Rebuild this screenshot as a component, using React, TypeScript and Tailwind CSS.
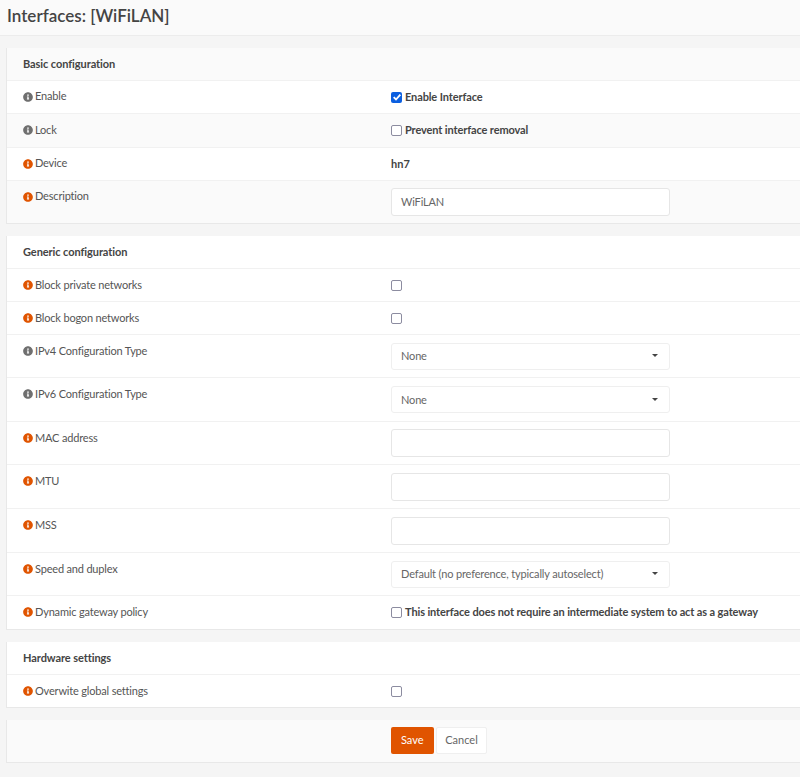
import { FaInfoCircle } from 'react-icons/fa'

const font = "font-['Lato','Liberation_Sans',sans-serif]"

function InfoIcon({ required }: { required?: boolean }) {
  return <FaInfoCircle className={`h-[10px] w-[10px] shrink-0 ${required ? 'text-[#e05400]' : 'text-[#6f6f6f]'}`} />
}

function Checkbox({ checked }: { checked?: boolean }) {
  if (checked) {
    return (
      <span className="flex h-[11px] w-[11px] shrink-0 items-center justify-center rounded-[2px] bg-[#0b5fe0]">
        <svg viewBox="0 0 12 12" className="h-[10px] w-[10px]" fill="none" stroke="#fff" strokeWidth="2.2">
          <path d="M2 6.2l2.8 2.8L10 3.2" />
        </svg>
      </span>
    )
  }
  return <span className="h-[11px] w-[11px] shrink-0 rounded-[2px] border-[1.5px] border-[#8c8ca0] bg-white" />
}

function TextBox({ value }: { value?: string }) {
  return (
    <div className="flex h-[28px] w-[278.5px] items-center rounded-[3px] border-[1.5px] border-[#e6e6e6] bg-white pr-[10px] pl-[9px] text-[11px] tracking-[-0.16px] text-[#666]">
      {value}
    </div>
  )
}

function Select({ value }: { value: string }) {
  return (
    <div className="flex h-[27px] w-[278.5px] items-center justify-between rounded-[3px] border border-[#efefef] bg-white pt-[1px] pr-[10px] pl-[9px] text-[11px] tracking-[-0.16px] text-[#666]">
      <span>{value}</span>
      <span className="mr-[1px] mb-[2px] h-0 w-0 border-x-[3px] border-t-[3px] border-x-transparent border-t-[#444]" />
    </div>
  )
}

function Row({ label, required, striped, tight, height, children }: { label: string; required?: boolean; striped?: boolean; tight?: boolean; height: string; children?: React.ReactNode }) {
  return (
    <div className={`flex border-t border-[#f1f1f1] ${height} ${striped ? 'bg-[#fafafa]' : 'bg-white'}`}>
      <div className={`flex w-[384px] shrink-0 items-center gap-[2px] pl-[16px] text-[11px] tracking-[-0.18px] text-[#555] ${tight ? 'h-[31px]' : 'h-[32px]'}`}>
        <InfoIcon required={required} />
        <span>{label}</span>
      </div>
      <div className="flex flex-1 items-center whitespace-nowrap">{children}</div>
    </div>
  )
}

function CheckLabel({ checked, children }: { checked?: boolean; children?: React.ReactNode }) {
  return (
    <div className="flex items-center gap-[3px] text-[11px] font-bold tracking-[-0.12px] text-[#444]">
      <Checkbox checked={checked} />
      <span>{children}</span>
    </div>
  )
}

function Section({ title, striped, children }: { title: string; striped?: boolean; children: React.ReactNode }) {
  return (
    <section className="ml-[6px] border-b border-l border-[#e8e8e8]">
      <div className={`flex h-[32px] items-center pt-[1px] pl-[16px] text-[11px] font-bold tracking-[-0.08px] text-[#444] ${striped ? 'bg-[#fafafa]' : 'bg-white'}`}>
        {title}
      </div>
      {children}
    </section>
  )
}

export default function App() {
  return (
    <div className={`${font} h-[777px] overflow-hidden bg-[#f5f5f5]`}>
      <header className="flex h-[36px] items-center border-b border-[#ececec] bg-[#fafafa] pb-[3px] pl-[7px] text-[17px] font-semibold text-[#444]">
        Interfaces: [WiFiLAN]
      </header>

      <div className="flex flex-col gap-[12px] pt-[12px]">
        <Section title="Basic configuration" striped>
          <Row label="Enable" tight height="h-[33px]">
            <CheckLabel checked>Enable Interface</CheckLabel>
          </Row>
          <Row label="Lock" striped height="h-[34px]">
            <CheckLabel>Prevent interface removal</CheckLabel>
          </Row>
          <Row label="Device" required tight height="h-[33px]">
            <span className="text-[11px] font-bold text-[#444]">hn7</span>
          </Row>
          <Row label="Description" required striped tight height="h-[43px]">
            <TextBox value="WiFiLAN" />
          </Row>
        </Section>

        <Section title="Generic configuration">
          <Row label="Block private networks" required height="h-[33px]">
            <Checkbox />
          </Row>
          <Row label="Block bogon networks" required height="h-[33px]">
            <Checkbox />
          </Row>
          <Row label="IPv4 Configuration Type" height="h-[43px]">
            <Select value="None" />
          </Row>
          <Row label="IPv6 Configuration Type" height="h-[44px]">
            <Select value="None" />
          </Row>
          <Row label="MAC address" required height="h-[43px]">
            <TextBox />
          </Row>
          <Row label="MTU" required height="h-[44px]">
            <TextBox />
          </Row>
          <Row label="MSS" required height="h-[44px]">
            <TextBox />
          </Row>
          <Row label="Speed and duplex" required height="h-[43px]">
            <Select value="Default (no preference, typically autoselect)" />
          </Row>
          <Row label="Dynamic gateway policy" required height="h-[34px]">
            <CheckLabel>This interface does not require an intermediate system to act as a gateway</CheckLabel>
          </Row>
        </Section>

        <Section title="Hardware settings">
          <Row label="Overwite global settings" required height="h-[33px]">
            <Checkbox />
          </Row>
        </Section>

        <div className="ml-[6px] flex h-[43px] items-center gap-[2.5px] border-b border-l border-[#e8e8e8] bg-[#fafafa] pb-[1px] pl-[384px] text-[11px]">
          <button className="h-[27px] w-[42.5px] rounded-[2px] bg-[#e05400] text-white">Save</button>
          <button className="h-[27px] w-[51px] rounded-[2px] border border-[#efefef] bg-white text-[#666]">Cancel</button>
        </div>
      </div>
    </div>
  )
}
